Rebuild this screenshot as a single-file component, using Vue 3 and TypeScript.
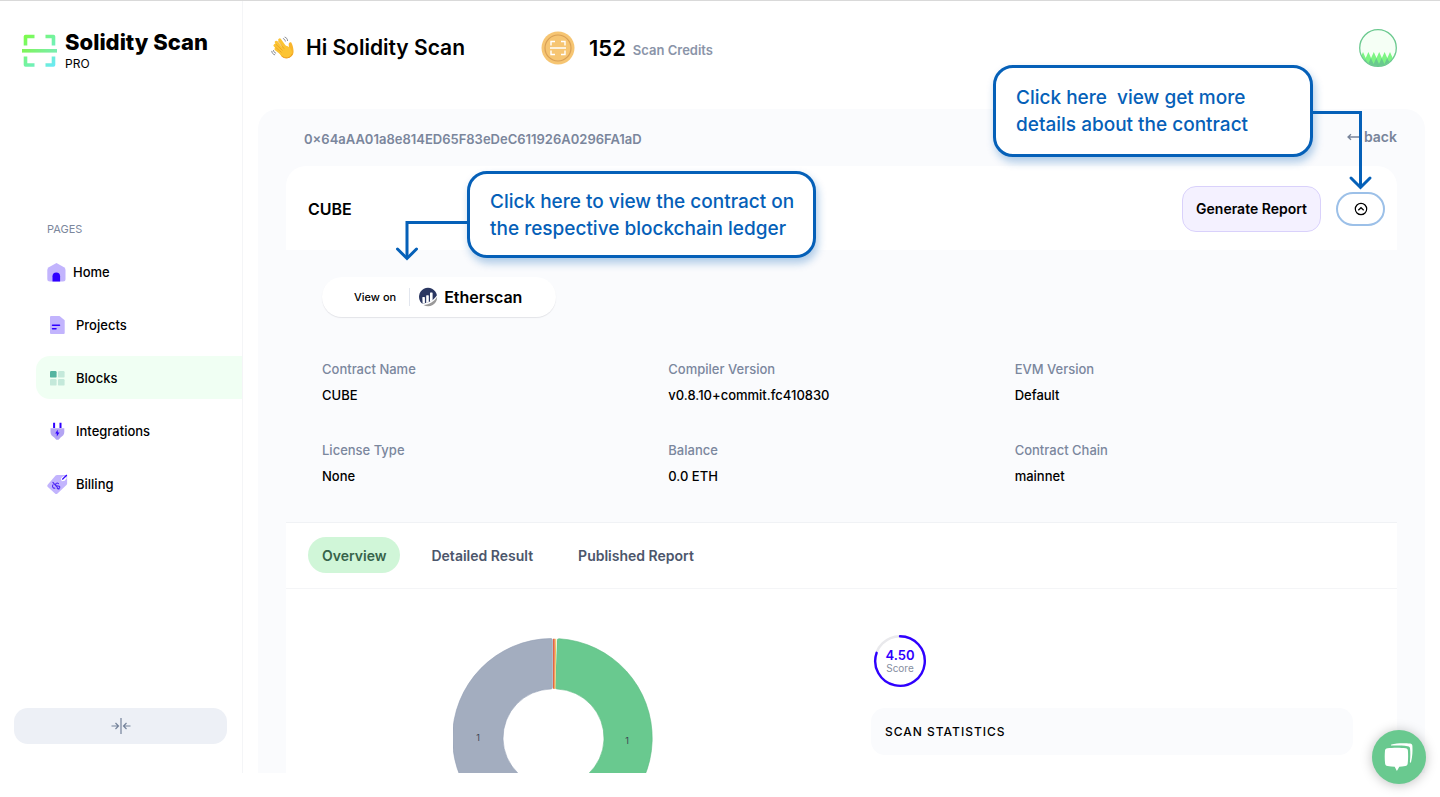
<script setup lang="ts">
import { ref } from 'vue'

interface Field {
  label: string
  value: string
}

const pages = ['Home', 'Projects', 'Blocks', 'Integrations', 'Billing'] as const
const activePage = ref<string>('Blocks')

const fields: Field[] = [
  { label: 'Contract Name', value: 'CUBE' },
  { label: 'Compiler Version', value: 'v0.8.10+commit.fc410830' },
  { label: 'EVM Version', value: 'Default' },
  { label: 'License Type', value: 'None' },
  { label: 'Balance', value: '0.0 ETH' },
  { label: 'Contract Chain', value: 'mainnet' },
]

const tabs = ['Overview', 'Detailed Result', 'Published Report'] as const
const activeTab = ref<string>('Overview')
</script>

<template>
  <div class="app">
    <div class="shell">
      <aside class="sidebar">
        <div class="brand">
          <svg class="brand-mark" width="36" height="34" viewBox="0 0 36 34" aria-hidden="true">
            <defs>
              <linearGradient id="brand-fill" gradientUnits="userSpaceOnUse" x1="2" y1="1" x2="33" y2="33">
                <stop offset="0" stop-color="#7dfc45" />
                <stop offset="1" stop-color="#6ae9fb" />
              </linearGradient>
              <linearGradient id="bar-fill" gradientUnits="userSpaceOnUse" x1="0" y1="17" x2="36" y2="17">
                <stop offset="0" stop-color="#7ef556" />
                <stop offset="1" stop-color="#79edb4" />
              </linearGradient>
            </defs>
            <g fill="none" stroke="url(#brand-fill)" stroke-width="3.600" stroke-linejoin="round">
              <path d="M3.500 11.500V2.500H12.500M23.500 2.500H31.500V11.500M3.500 22.500V31H12.500M23.500 31H31.500V22.500" />
            </g>
            <rect x="0" y="15" width="35" height="3.600" fill="url(#bar-fill)" />
          </svg>
          <div class="brand-text">
            <span class="brand-name">Solidity Scan</span>
            <span class="brand-plan">PRO</span>
          </div>
        </div>

        <nav class="nav" aria-label="Pages">
          <p class="nav-title">PAGES</p>
          <a
            v-for="page in pages"
            :key="page"
            href="#"
            class="nav-item"
            :class="{ active: activePage === page, first: page === 'Home' }"
            @click.prevent="activePage = page"
          >
            <svg v-if="page === 'Home'" class="nav-icon" width="20" height="20" viewBox="0 0 20 20">
              <path d="M9.500 1 L17 5.200 Q18.500 6.200 18.500 8 V17 Q18.500 19.500 16 19.500 H3 Q0.300 19.500 0.300 17 V8 Q0.300 6.200 1.800 5.200 Z" fill="#c2b4fd" />
              <path d="M5.500 19.500v-5.300a3.800 3.800 0 0 1 7.600 0v5.300z" fill="#2f00ff" />
            </svg>
            <svg v-else-if="page === 'Projects'" class="nav-icon" width="20" height="20" viewBox="0 0 20 20">
              <path d="M3.500 1H12l5.200 4.200V18a1 1 0 0 1-1 1H3.500a1 1 0 0 1-1-1V2a1 1 0 0 1 1-1z" fill="#c2b4fd" />
              <path d="M5 10.300h7M5 13.800h3.500" stroke="#2f00ff" stroke-width="1.500" stroke-linecap="round" />
            </svg>
            <svg v-else-if="page === 'Blocks'" class="nav-icon" width="20" height="20" viewBox="0 0 20 20">
              <rect x="2.500" y="3" width="6.600" height="6.600" rx="1.200" fill="#54b4a0" />
              <rect x="10.500" y="3" width="6.600" height="6.600" rx="1.200" fill="#c4e9da" />
              <rect x="2.500" y="11" width="6.600" height="6.600" rx="1.200" fill="#c4e9da" />
              <rect x="10.500" y="11" width="6.600" height="6.600" rx="1.200" fill="#c4e9da" />
            </svg>
            <svg v-else-if="page === 'Integrations'" class="nav-icon" width="20" height="20" viewBox="0 0 20 20">
              <path d="M3 7.200h13.800V11c0 2.600-1.600 4.200-3.500 5.200l-2.300 2.500H8.800l-2.300-2.500C4.500 15.200 3 13.500 3 11z" fill="#b3a4f3" />
              <path d="M6.600 1.800v5.200M13 1.800v5.200" stroke="#2f00ff" stroke-width="2" />
              <path d="M10.200 8.800L7.700 12.500h1.600v2.900l2.700-3.900h-1.800z" fill="#2f00ff" />
            </svg>
            <svg v-else class="nav-icon" width="22" height="22" viewBox="0 0 22 22">
              <path d="M10.500 1.500H20.300a.8.800 0 0 1 .8.800v8.200a2 2 0 0 1-.7 1.500L11 21a2 2 0 0 1-2.600 0L.900 14.200a2 2 0 0 1 0-2.700L9 2.200a2 2 0 0 1 1.500-.7z" fill="#c2b4fd" />
              <path d="M14.500 5.200 17 3l4 1.500-2.500 3.200-3 .3z" fill="#fff" />
              <path d="M16 6.300 20.800 1.600" stroke="#2f00ff" stroke-width="1.200" />
              <path d="M6.200 9.300l6.200 7.200M12 10.600c-1.500-1.600-3.800.2-2.600 1.800 1.200 1.500 3.400-.2 4 1.700.1 1.500-1.500 2.400-2.700 1.600M6.300 11.800c-1.400 1.700.3 4.200 2 3.500" fill="none" stroke="#4a22f4" stroke-width="1.100" stroke-linecap="round" />
            </svg>
            <span>{{ page }}</span>
          </a>
        </nav>

        <button class="collapse" type="button" aria-label="Collapse sidebar">
          <svg width="20" height="18" viewBox="0 0 20 18" fill="none" stroke="#74829a" stroke-width="1.200">
            <path d="M10 1v16M.500 9h7M4.500 6l3 3-3 3M19.500 9h-7M15.500 6l-3 3 3 3" />
          </svg>
        </button>
      </aside>

      <main class="main">
        <header class="topbar">
          <svg class="wave" width="24" height="24" viewBox="0 0 24 24" aria-hidden="true">
            <path d="M20.300 6.500c-1.700-.7-2.700.6-2.600 2.300l.3 2.500-4.500 8.500 2.500 2c4.500.3 7-3.300 6.500-7.300-.3-2.500-.5-5-2.200-8z" fill="#f9b52d" />
            <ellipse cx="14.500" cy="15.800" rx="6.800" ry="6" transform="rotate(40 14.500 15.800)" fill="#fcc433" />
            <path d="M15.500 13.500L8.700 4M12.500 15.500L5.300 6.300M11 16.500L4 9.500M11.500 18L5 13" fill="none" stroke="#fcc433" stroke-width="3.100" stroke-linecap="round" />
            <path d="M13 12.500L7.300 5.500M11.300 14.200L5 8.300M10.300 16.200L4.800 11.500" fill="none" stroke="#e79b22" stroke-width=".7" stroke-linecap="round" />
            <path d="M10.500 19.800c3.300 3.400 9 2.700 10.800-2" fill="none" stroke="#ed9b24" stroke-width="1" />
            <path d="M14 1.200c1.500.5 2.500 1.700 2.600 3.400M12.300 2.600c1.200.4 1.900 1.300 2 2.500M.8 15.300c.2 1.800 1.200 3 2.900 3.500M2.500 14.500c.2 1.300.9 2.200 2.200 2.600" fill="none" stroke="#777c83" stroke-width=".9" stroke-linecap="round" />
          </svg>
          <h1 class="greeting">Hi Solidity Scan</h1>
          <svg class="coin" width="34" height="34" viewBox="0 0 34 34" aria-hidden="true">
            <circle cx="17" cy="17" r="16.500" fill="#f6c572" />
            <circle cx="17" cy="17" r="13" fill="none" stroke="#d9a056" stroke-width="1.200" />
            <path d="M10 14.500V10.500h4M20 10.500h4v4M10 19.500v4h4M20 23.500h4v-4M9 17h16" fill="none" stroke="#fff" stroke-width="1.400" />
          </svg>
          <strong class="credits">152</strong>
          <span class="credits-label">Scan Credits</span>
          <button class="avatar" type="button" aria-label="Account">
            <svg width="38" height="38" viewBox="0 0 38 38">
              <defs>
                <clipPath id="avatar-clip"><circle cx="19" cy="19" r="18" /></clipPath>
              </defs>
              <circle cx="19" cy="19" r="18" fill="#f5fff5" />
              <g clip-path="url(#avatar-clip)">
                <path d="M1 30l3-7 2.700 6 2.700-6 2.700 6 2.700-6 2.700 6 2.700-6 2.700 6 2.700-6 2.700 6 2.700-6 2.700 6 2.700-6 2.700 7v9H0z" fill="#7df584" />
                <path d="M3 38l3.500-8 2.700 5 2.700-6 2.700 6 2.700-6 2.700 6 2.700-6 2.700 6 2.700-6 2.700 5L36 38z" fill="#6ac98f" />
              </g>
              <circle cx="19" cy="19" r="18.300" fill="none" stroke="#6bc98f" stroke-width="1.300" />
            </svg>
          </button>
        </header>

        <section class="panel">
          <div class="address-row">
            <span class="address">0×64aAA01a8e814ED65F83eDeC611926A0296FA1aD</span>
            <a class="back" href="#" @click.prevent>
              <svg width="12" height="10" viewBox="0 0 12 10" fill="none" stroke="#78849a" stroke-width="1.300">
                <path d="M12 5H1M4 2.200L1 5l3 2.800" />
              </svg>
              <span>back</span>
            </a>
          </div>

          <div class="contract-head">
            <h2 class="contract-title">CUBE</h2>
            <button class="report" type="button">Generate Report</button>
            <button class="toggle" type="button" aria-label="Hide contract details">
              <svg width="14" height="14" viewBox="0 0 14 14" fill="none" stroke="#000" stroke-width="1.200">
                <circle cx="7" cy="7" r="5.700" />
                <path d="M4.300 8.300L7 5.700l2.700 2.600" />
              </svg>
            </button>
          </div>

          <div class="details">
            <a class="explorer" href="#" @click.prevent>
              <span class="view-on">View on</span>
              <svg class="explorer-mark" width="20" height="20" viewBox="0 0 20 20">
                <path d="M3.700 16.200A9 9 0 1 1 18.900 8.300c-2.500 4.500-8 7.500-13.200 8.100-.8.100-1.500.1-2-.2z" fill="#2b3761" />
                <path d="M19.100 9.800A9 9 0 0 1 5.500 17.900C11 17.700 16.500 14.500 19.100 9.800z" fill="#9a9999" />
                <path d="M4.300 10.500q0-.6.600-.6h1.400q.6 0 .6.600v5.700l-2.300.4zM8.200 8.800q0-.6.600-.6h1.400q.6 0 .6.600v6.400l-2.600.8zM12 6q0-.6.600-.6H14q.6 0 .6.600v7.200L12 14.700z" fill="#fff" />
              </svg>
              <span class="explorer-name">Etherscan</span>
            </a>
            <dl class="fields">
              <div v-for="field in fields" :key="field.label" class="field">
                <dt>{{ field.label }}</dt>
                <dd>{{ field.value }}</dd>
              </div>
            </dl>
          </div>

          <div class="tabs" role="tablist">
            <button
              v-for="tab in tabs"
              :key="tab"
              type="button"
              role="tab"
              class="tab"
              :class="{ selected: activeTab === tab }"
              :aria-selected="activeTab === tab"
              @click="activeTab = tab"
            >
              {{ tab }}
            </button>
          </div>

          <div class="overview">
            <div class="chart">
              <svg width="200" height="200" viewBox="0 0 200 200" role="img" aria-label="Findings by severity">
                <path d="M98 .500A99.500 99.500 0 0 0 100 199.500V149A49 49 0 0 1 98 51q1.500 0 1.500-2V2.500q0-2-1.500-2z" fill="#a3adbf" stroke="#929db3" stroke-width=".6" />
                <path d="M106 .700A99.500 99.500 0 0 1 100 199.500V149A49 49 0 0 0 104 51q-1.800 0-1.700-2L104 2.700q0-2 2-2z" fill="#69c98f" stroke="#5dbb82" stroke-width=".6" />
                <path d="M99.900 .500h4L102.200 51h-2.300z" fill="#fff" />
                <path d="M100.900 .800v50" stroke="#e2562f" stroke-width="1.600" />
                <path d="M102.700 .800L101.900 51" stroke="#f3c052" stroke-width="1" />
                <text x="25" y="103" text-anchor="middle">1</text>
                <text x="174" y="106" text-anchor="middle">1</text>
              </svg>
            </div>
            <div class="summary">
              <div class="score">
                <svg class="score-ring" width="54" height="54" viewBox="0 0 54 54" fill="none" aria-hidden="true">
                  <circle cx="27" cy="27" r="24.800" stroke="#e9e9ec" stroke-width="2.400" />
                  <path d="M27 2.200A24.800 24.800 0 1 1 3.600 18.800" stroke="#2f00ff" stroke-width="2.400" stroke-linecap="round" />
                </svg>
                <div class="score-text">
                  <strong>4.50</strong>
                  <span>Score</span>
                </div>
              </div>
              <h3 class="stats-title">SCAN STATISTICS</h3>
            </div>
          </div>
        </section>
      </main>
    </div>

    <div class="callout callout-ledger">
      <svg class="pointer" width="74" height="42" viewBox="0 0 74 42" fill="none" stroke="#0560b8" stroke-width="3">
        <path d="M74 2.500H12V38" />
        <path d="M2.500 29l9.500 9.500L21.500 29" stroke-linecap="round" />
      </svg>
      <p>Click here to view the contract on<br />the respective blockchain ledger</p>
    </div>

    <div class="callout callout-details">
      <svg class="pointer" width="62" height="80" viewBox="0 0 62 80" fill="none" stroke="#0560b8" stroke-width="3">
        <path d="M0 2.500H49.500V77" />
        <path d="M40 68l9.500 9.500L59 68" stroke-linecap="round" />
      </svg>
      <p>Click here&nbsp; view get more<br />details about the contract</p>
    </div>

    <button class="chat" type="button" aria-label="Open chat">
      <svg width="32" height="32" viewBox="0 0 32 32">
        <path d="M8.500 3.500C13 2 22 1.800 27 2.600c1.600.3 2.300 1 2.400 2.400.3 4.500.1 11-1.400 16.200-.2.700-1.200.5-1.100-.3.600-5.300.5-9.500.2-13-.1-1.700-.8-2.500-2.500-2.700-5-.6-10-.7-16-.6-.8 0-.9-.9-.1-1.100z" fill="#fff" />
        <path d="M4.500 7.200c5.200-.7 13.500-.7 18.200 0 1.500.2 2.100 1 2.200 2.400.3 4.300.3 8.500-.2 13-.2 1.500-.9 2.200-2.400 2.500-2.200.3-4.300.5-6 .6L13.900 30l-2.200-4.300c-2.300 0-4.900-.3-7.200-.6-1.500-.3-2.200-1-2.400-2.500-.5-4.500-.5-8.700-.1-13 .1-1.400 1-2.200 2.500-2.400z" fill="#fff" />
      </svg>
    </button>
  </div>
</template>

<style>
body {
  margin: 0;
  background: #fff;
}
</style>

<style scoped>
.app {
  position: relative;
  box-sizing: border-box;
  height: 100vh;
  padding-bottom: 24px;
  border-top: 1px solid #d9d9d9;
  overflow: hidden;
  font-family: Inter, "Liberation Sans", sans-serif;
  color: #000;
}
.app *,
.app *::before {
  box-sizing: border-box;
}
button {
  font-family: inherit;
  cursor: pointer;
}
a {
  color: inherit;
  text-decoration: none;
}
svg {
  display: block;
  flex: none;
}
.shell {
  display: flex;
  height: 100%;
  overflow: hidden;
}

.sidebar {
  display: flex;
  flex-direction: column;
  flex: none;
  width: 243px;
  border-right: 1px solid #f4f5f7;
}
.brand {
  display: flex;
  gap: 7px;
  padding: 28px 0 0 22px;
}
.brand-mark {
  margin-top: 5px;
}
.brand-text {
  display: flex;
  flex-direction: column;
}
.brand-name {
  font-size: 22px;
  font-weight: 800;
  line-height: 27px;
  white-space: nowrap;
}
.brand-plan {
  font-size: 12px;
  line-height: 16px;
}
.nav {
  display: flex;
  flex-direction: column;
  gap: 10px;
  margin-top: 149px;
  padding-left: 36px;
}
.nav-title {
  margin: 0 0 3px 11px;
  font-size: 11px;
  line-height: 16px;
  color: #7c879c;
}
.nav-item {
  display: flex;
  align-items: center;
  gap: 8px;
  height: 43px;
  padding-left: 11px;
  border-radius: 14px 0 0 14px;
  font-size: 13px;
  font-weight: 500;
}
.nav-item.first {
  gap: 6px;
}
.nav-item.active {
  background: #f0fff3;
}
.nav-icon {
  width: 21px;
}
.nav-item.first .nav-icon {
  width: 20px;
}
.collapse {
  display: flex;
  align-items: center;
  justify-content: center;
  height: 36px;
  margin: auto 15px 29px 14px;
  padding: 0;
  border: 0;
  border-radius: 14px;
  background: #edf0f6;
}

.main {
  display: flex;
  flex-direction: column;
  flex: 1;
  min-width: 0;
  padding: 0 15px;
}
.topbar {
  display: flex;
  align-items: center;
  flex: none;
  height: 93px;
  margin-bottom: 15px;
  padding: 0 28px 0 13px;
}
.greeting {
  margin: 0 76px 0 11px;
  font-size: 21px;
  font-weight: 600;
  line-height: 28px;
  white-space: nowrap;
}
.credits {
  margin: 0 7px 0 14px;
  font-size: 22px;
  font-weight: 600;
}
.credits-label {
  padding-top: 5px;
  font-size: 13px;
  font-weight: 600;
  color: #8a94a8;
}
.avatar {
  margin-left: auto;
  padding: 0;
  border: 0;
  background: none;
}

.panel {
  flex: 1;
  min-height: 0;
  padding: 0 28px;
  border-radius: 20px 20px 0 0;
  background: #fafbfd;
  overflow: hidden;
}
.address-row {
  display: flex;
  align-items: center;
  justify-content: space-between;
  height: 57px;
  padding-left: 18px;
}
.address {
  padding-top: 2px;
  font-size: 13px;
  font-weight: 600;
  color: #7a869c;
}
.back {
  display: flex;
  align-items: center;
  gap: 5px;
  padding-bottom: 2px;
  font-size: 14px;
  font-weight: 600;
  color: #78849a;
}
.contract-head {
  display: flex;
  align-items: center;
  height: 84px;
  padding: 1px 12px 0 22px;
  border-radius: 20px 20px 0 0;
  background: #fff;
}
.contract-title {
  margin: 0 auto 0 0;
  font-size: 16px;
  font-weight: 600;
}
.report {
  height: 46px;
  margin-right: 15px;
  padding: 0 13px;
  border: 1px solid #d9d1fb;
  border-radius: 14px;
  background: #f4f1ff;
  color: #000;
  font-size: 14px;
  font-weight: 600;
}
.toggle {
  display: flex;
  align-items: center;
  justify-content: center;
  width: 49px;
  height: 34px;
  padding: 0;
  border: 2px solid #9cc0e8;
  border-radius: 17px;
  background: #fff;
}

.details {
  padding: 27px 36px 37px;
}
.explorer {
  display: flex;
  align-items: center;
  width: 234px;
  height: 40px;
  padding-left: 32px;
  border-radius: 20px;
  background: #fff;
  box-shadow: 0 1px 1px #e3e4e8;
}
.view-on {
  padding-right: 13px;
  border-right: 1px solid #e2e6ee;
  font-size: 11px;
  font-weight: 500;
  line-height: 18px;
}
.explorer-mark {
  margin: 0 6px 0 8px;
}
.explorer-name {
  font-size: 16px;
  font-weight: 600;
}
.fields {
  display: grid;
  grid-template-columns: repeat(3, 1fr);
  row-gap: 37px;
  margin: 43px 0 0;
}
.field {
  display: flex;
  flex-direction: column;
  gap: 8px;
  font-size: 13px;
  font-weight: 500;
  line-height: 18px;
}
.field dt {
  color: #7b879d;
}
.field dd {
  margin: 0;
}

.tabs {
  display: flex;
  align-items: center;
  gap: 17px;
  height: 67px;
  padding: 0 22px 1px;
  border-top: 1px solid #f0f2f5;
  border-bottom: 1px solid #f4f5f7;
  background: #fff;
}
.tab {
  height: 36px;
  padding: 0 14px;
  border: 0;
  border-radius: 18px;
  background: none;
  color: #4c566b;
  font-size: 14px;
  font-weight: 600;
}
.tab.selected {
  background: #d0f6d8;
  color: #37634a;
}

.overview {
  display: grid;
  grid-template-columns: 534px 1fr;
  min-height: 300px;
  padding: 45px 44px 0 0;
  background: #fff;
}
.chart {
  display: flex;
  justify-content: center;
  padding-top: 4px;
}
.chart text {
  font-size: 9px;
  fill: #3b4450;
}
.summary {
  padding-left: 51px;
}
.score {
  display: grid;
  width: 54px;
  margin-left: 2px;
}
.score-ring,
.score-text {
  grid-area: 1 / 1;
}
.score-text {
  display: flex;
  flex-direction: column;
  align-items: center;
  justify-content: center;
}
.score-text strong {
  font-size: 13px;
  font-weight: 600;
  line-height: 14px;
  color: #2f00ff;
}
.score-text span {
  font-size: 10px;
  line-height: 13px;
  color: #858e9f;
}
.stats-title {
  margin: 20px 0 0;
  padding: 0 14px;
  border-radius: 14px;
  background: #fafbfd;
  font-size: 12px;
  font-weight: 500;
  line-height: 47px;
  letter-spacing: 1px;
}

.callout {
  position: absolute;
  border: 3px solid #0560b8;
  border-radius: 20px;
  background: #fff;
  box-shadow: 2px 5px 9px rgba(5, 96, 184, 0.32);
  color: #0560b8;
  font-size: 19px;
  font-weight: 500;
  line-height: 27px;
  white-space: nowrap;
}
.callout p {
  margin: 0;
}
.callout-ledger {
  top: 170px;
  left: 467px;
  width: 349px;
  padding: 14px 20px 13px;
}
.callout-details {
  top: 64px;
  right: 127px;
  width: 320px;
  padding: 16px 20px;
}
.pointer {
  position: absolute;
}
.callout-ledger .pointer {
  top: 46px;
  right: 344px;
}
.callout-details .pointer {
  top: 42px;
  left: 315px;
}

.chat {
  position: absolute;
  right: 14px;
  bottom: 13px;
  display: flex;
  align-items: center;
  justify-content: center;
  width: 54px;
  height: 54px;
  padding: 0;
  border: 0;
  border-radius: 50%;
  background: #69c98f;
  box-shadow: 0 1px 12px rgba(0, 0, 0, 0.25);
}
</style>
